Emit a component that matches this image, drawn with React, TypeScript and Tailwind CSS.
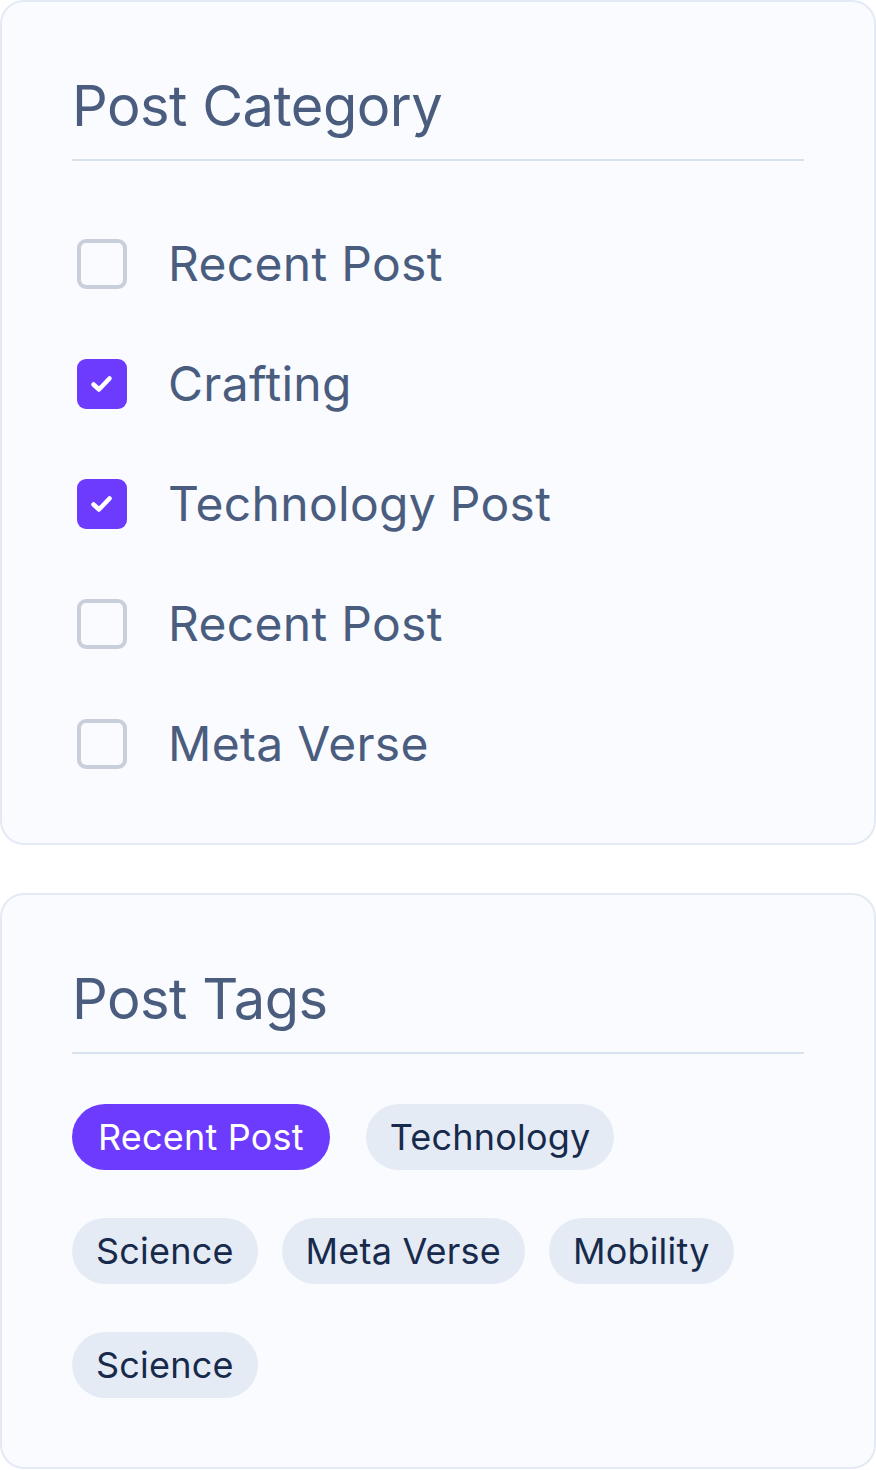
const categories = [
  { label: "Recent Post", checked: false },
  { label: "Crafting", checked: true },
  { label: "Technology Post", checked: true },
  { label: "Recent Post", checked: false },
  { label: "Meta Verse", checked: false },
];

const tags = [
  { label: "Recent Post", active: true },
  { label: "Technology", active: false },
  { label: "Science", active: false },
  { label: "Meta Verse", active: false },
  { label: "Mobility", active: false },
  { label: "Science", active: false },
];

function Checkbox({ checked }: { checked: boolean }) {
  if (checked) {
    return (
      <span className="flex h-[50px] w-[50px] shrink-0 items-center justify-center rounded-[9px] bg-[#6c3bfe]">
        <svg width="50" height="50" viewBox="0 0 50 50" fill="none">
          <path
            d="M16.5 25.5 L22 30.5 L32.5 19.5"
            stroke="#ffffff"
            strokeWidth="4.5"
            strokeLinecap="round"
            strokeLinejoin="round"
          />
        </svg>
      </span>
    );
  }
  return (
    <span className="block h-[50px] w-[50px] shrink-0 rounded-[9px] border-4 border-[#c9cfda]" />
  );
}

function CardHeading({ children }: { children: string }) {
  return (
    <h2 className="border-b-2 border-[#d8e2ee] pb-[19px] text-[56px] leading-[68px] font-normal tracking-[-0.5px] text-[#4a5d7e]">
      {children}
    </h2>
  );
}

export default function App() {
  return (
    <div className="flex min-h-screen flex-col gap-12 bg-white font-['Inter',sans-serif]">
      {/* Category card */}
      <section className="rounded-[24px] border-2 border-[#e3eaf4] bg-[#f9fbfe] px-[70px] pt-[70px] pb-[74px]">
        <CardHeading>Post Category</CardHeading>
        <ul className="mt-[78px] flex flex-col gap-[70px] pl-[5px]">
          {categories.map((c, i) => (
            <li key={i} className="flex h-[50px] items-center gap-[41px]">
              <Checkbox checked={c.checked} />
              <span className="text-[48px] leading-none tracking-[0.3px] text-[#4a5d7e]">
                {c.label}
              </span>
            </li>
          ))}
        </ul>
      </section>

      {/* Tags card */}
      <section className="rounded-[24px] border-2 border-[#e3eaf4] bg-[#f9fbfe] px-[70px] pt-[70px] pb-[69px]">
        <CardHeading>Post Tags</CardHeading>
        <div className="mt-[50px] flex flex-wrap gap-x-6 gap-y-12">
          {tags.map((t, i) => (
            <span
              key={i}
              className={
                t.active
                  ? "mr-3 flex h-[66px] items-center rounded-full bg-[#6c3bfe] px-[26px] text-[36px] leading-none tracking-[0.2px] text-white"
                  : "flex h-[66px] items-center rounded-full bg-[#e4ebf5] px-6 text-[36px] leading-none tracking-[0.2px] text-[#172a4c]"
              }
            >
              {t.label}
            </span>
          ))}
        </div>
      </section>
    </div>
  );
}
